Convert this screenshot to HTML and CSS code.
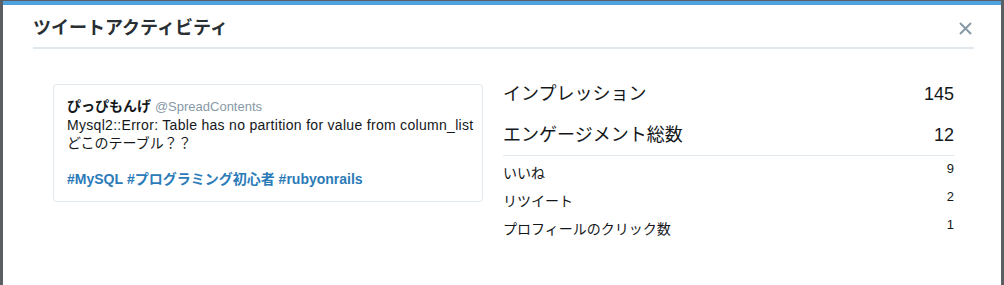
FILE: index.html
```html
<!DOCTYPE html>
<html lang="ja">
<head>
    <meta charset="UTF-8">
    <title>ツイートアクティビティ</title>
    <link rel="stylesheet" href="styles.css">
</head>
<body>

    <div class="modal">
        <!-- header -->
        <div class="modal-header">
            <h3 class="modal-title">ツイートアクティビティ</h3>
            <button class="close" aria-label="閉じる">
                <svg width="13" height="13" viewBox="0 0 13 13"><path d="M1 1L12 12M12 1L1 12" stroke="#8899a6" stroke-width="2" fill="none"/></svg>
            </button>
        </div>

        <div class="modal-body">
            <!-- tweet -->
            <div class="tweet">
                <div class="tweet-user"><b>ぴっぴもんげ</b> <span class="handle">@SpreadContents</span></div>
                <p class="tweet-text"><span class="latin">Mysql2::Error: Table has no partition for value from column_list</span><br>どこのテーブル？？<br><br><a class="tag">#MySQL</a> <a class="tag">#プログラミング初心者</a> <a class="tag">#rubyonrails</a></p>
            </div>

            <!-- stats -->
            <div class="stats">
                <div class="stat-big"><span>インプレッション</span><span>145</span></div>
                <div class="stat-big stat-total"><span>エンゲージメント総数</span><span>12</span></div>
                <div class="stat-row"><span>いいね</span><span class="num">9</span></div>
                <div class="stat-row"><span>リツイート</span><span class="num">2</span></div>
                <div class="stat-row"><span>プロフィールのクリック数</span><span class="num">1</span></div>
            </div>
        </div>
    </div>

</body>
</html>
```

FILE: styles.css
```css
body {
    margin: 0;
    padding: 1px 3px 0 3px;
    height: 284px;
    display: flex;
    background: #5a5f63;
    font-family: "Liberation Sans", "Noto Sans CJK JP", sans-serif;
    color: #14171a;
}

.modal {
    flex: 1;
    background: #fff;
    border-top: 4px solid #4ea2e0;
}

/* header */
.modal-header {
    margin: 0 27px 0 30px;
    padding: 11px 0 7px;
    display: flex;
    align-items: center;
    justify-content: space-between;
    border-bottom: 2px solid #e1e8ed;
}

.modal-title {
    margin: 0;
    font-size: 18px;
    line-height: 24px;
    font-weight: bold;
    color: #292f33;
}

.close {
    border: 0;
    padding: 0;
    background: none;
    width: 13px;
    height: 13px;
    margin-right: 2px;
    display: flex;
    cursor: pointer;
}

/* body */
.modal-body {
    display: grid;
    grid-template-columns: 430px 1fr;
    gap: 20px;
    padding: 33px 47px 0 50px;
    align-items: start;
}

.tweet {
    margin-top: 2px;
    border: 1px solid #e1e8ed;
    border-radius: 4px;
    padding: 12px 6px 13px 13px;
    font-size: 14px;
    line-height: 18px;
}

.tweet-user b {
    font-weight: bold;
}

.handle {
    color: #8899a6;
    font-size: 13px;
}

.tweet-text {
    margin: 0;
}

.tweet-text .latin {
    letter-spacing: 0.3px;
    white-space: nowrap;
}

.tag {
    color: #2b7bb9;
    font-weight: bold;
}

/* stats */
.stat-big {
    display: flex;
    justify-content: space-between;
    font-size: 18px;
    line-height: 24px;
    margin-bottom: 17px;
}

.stat-total {
    margin-bottom: 3px;
    padding-bottom: 8px;
    border-bottom: 1px solid #e1e8ed;
}

.stat-row {
    display: flex;
    justify-content: space-between;
    align-items: flex-start;
    font-size: 14px;
    line-height: 28px;
}

.stat-row .num {
    font-size: 13px;
    line-height: 20px;
}
```
